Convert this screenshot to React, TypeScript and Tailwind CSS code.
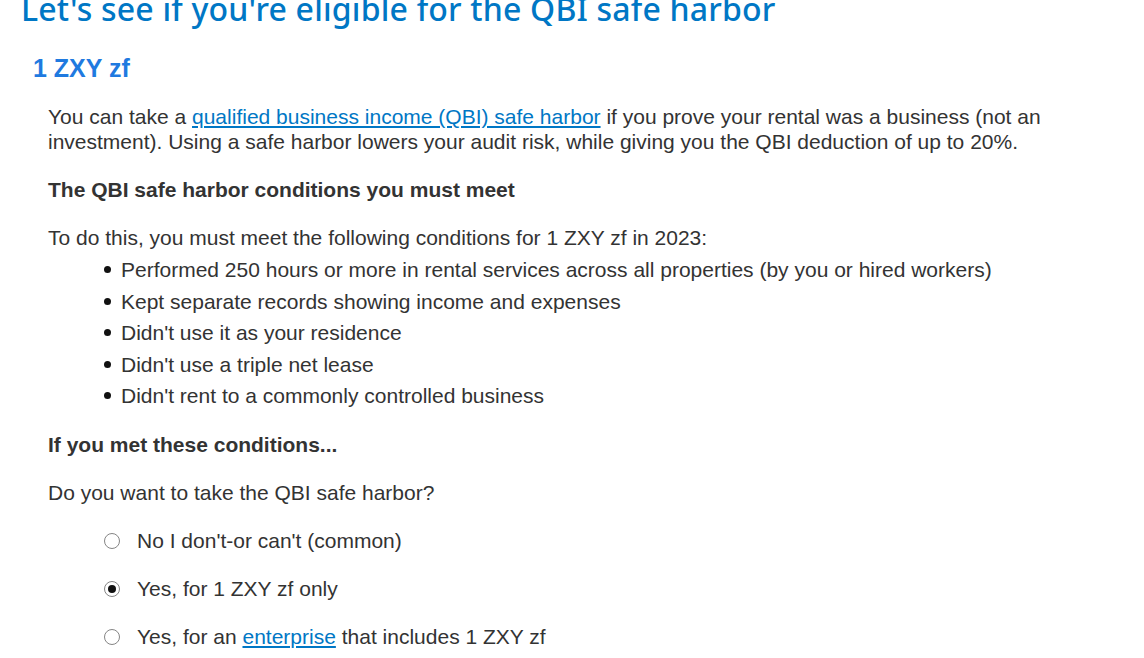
import React from 'react'

const CONDITIONS = [
  'Performed 250 hours or more in rental services across all properties (by you or hired workers)',
  'Kept separate records showing income and expenses',
  "Didn't use it as your residence",
  "Didn't use a triple net lease",
  "Didn't rent to a commonly controlled business",
]

function Radio({ checked, children }: { checked?: boolean; children: React.ReactNode }) {
  return (
    <label className="flex items-center h-[48px] cursor-pointer">
      <span className="ml-[104px] w-[16px] h-[16px] rounded-full border border-[#858585] bg-white flex items-center justify-center shrink-0">
        {checked && <span className="w-[8px] h-[8px] rounded-full bg-[#111]" />}
      </span>
      <span className="ml-[17px]">{children}</span>
    </label>
  )
}

export default function App() {
  return (
    <div className="w-[1144px] h-[658px] overflow-hidden bg-white text-[#333] font-['Liberation_Sans',Arial,sans-serif] text-[21px] leading-[25px]">
      <h1 className="mt-[-11px] ml-[21px] text-[#0077c5] text-[32px] leading-[40px] tracking-[0.2px] font-medium font-['Noto_Sans',sans-serif]">
        Let's see if you're eligible for the QBI safe harbor
      </h1>
      <h2 className="mt-[24px] ml-[33px] text-[#1f7ae0] text-[25px] leading-[30px] font-bold">1 ZXY zf</h2>

      <div className="ml-[48px] mt-[21px]">
        <p>
          You can take a{' '}
          <a href="#" className="text-[#0077c5] underline">
            qualified business income (QBI) safe harbor
          </a>{' '}
          if you prove your rental was a business (not an investment). Using a safe harbor lowers your audit risk, while
          giving you the QBI deduction of up to 20%.
        </p>

        <p className="mt-[23px] font-bold">The QBI safe harbor conditions you must meet</p>

        <p className="mt-[23px]">To do this, you must meet the following conditions for 1 ZXY zf in 2023:</p>
        <ul className="mt-[4px]">
          {CONDITIONS.map(c => (
            <li key={c} className="flex items-center h-[31.5px]">
              <span className="ml-[56px] w-[7px] h-[7px] rounded-full bg-[#111] shrink-0" />
              <span className="ml-[10px]">{c}</span>
            </li>
          ))}
        </ul>

        <p className="mt-[20px] font-bold">If you met these conditions...</p>
        <p className="mt-[23px]">Do you want to take the QBI safe harbor?</p>
      </div>

      <div className="mt-[12px]">
        <Radio>No I don't-or can't (common)</Radio>
        <Radio checked>Yes, for 1 ZXY zf only</Radio>
        <Radio>
          Yes, for an{' '}
          <a href="#" className="text-[#0077c5] underline">
            enterprise
          </a>{' '}
          that includes 1 ZXY zf
        </Radio>
      </div>
    </div>
  )
}
